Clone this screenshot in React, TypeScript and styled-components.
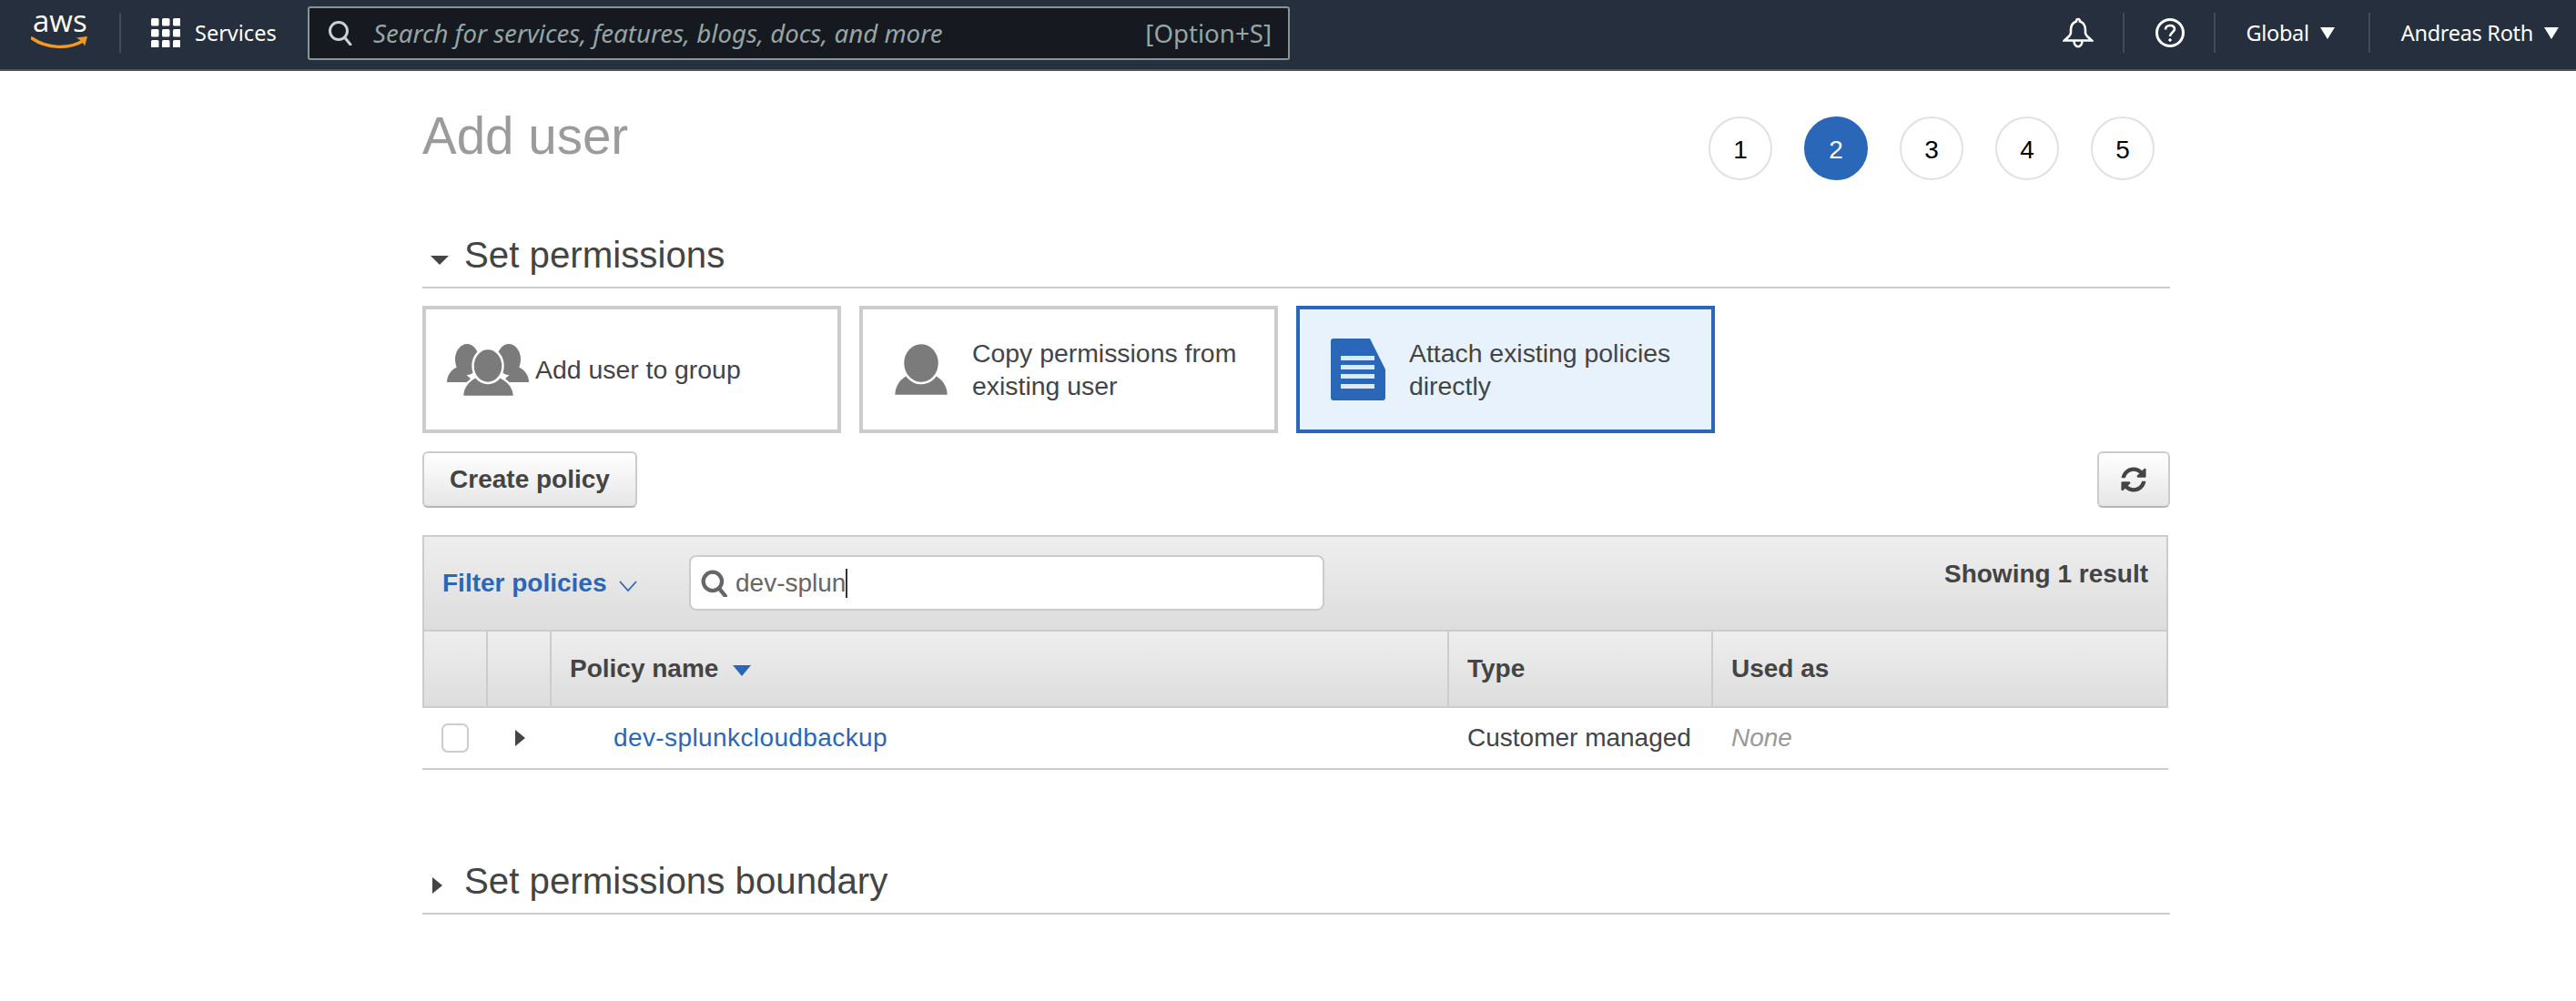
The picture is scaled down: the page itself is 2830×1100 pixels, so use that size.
import { createGlobalStyle, styled } from "styled-components";
import { FaSyncAlt } from "react-icons/fa";

const GlobalStyle = createGlobalStyle`
  body {
    margin: 0;
    background: #fff;
    font-family: "Liberation Sans", Arial, sans-serif;
    color: #444;
  }
`;

const Nav = styled.nav`
  height: 76px;
  box-sizing: content-box;
  background: #252f3e;
  border-bottom: 2px solid #4c5562;
  display: flex;
  align-items: center;
  padding: 0 19px 0 34px;
  font-family: "Noto Sans", sans-serif;
  font-size: 23.5px;
  color: #fff;
`;
const NavInner = styled.div`
  display: flex;
  align-items: center;
  width: 100%;
  margin-bottom: 4px;
`;
const Logo = styled.div`
  width: 64px;
  height: 40px;
  position: relative;
  svg {
    position: absolute;
    left: 0;
    bottom: 0;
  }
`;
const LogoText = styled.span`
  position: absolute;
  left: 2px;
  top: -13px;
  font-family: "Open Sans", sans-serif;
  font-size: 33px;
  line-height: 40px;
`;
const NavSep = styled.div<{ $left: number; $right: number }>`
  width: 2px;
  height: 44px;
  background: #414c5a;
  margin: 0 ${(p) => p.$right}px 0 ${(p) => p.$left}px;
`;
const Services = styled.span`
  width: 90px;
  margin: 0 34px 0 16px;
`;
const SearchBox = styled.div`
  width: 1079px;
  height: 59px;
  box-sizing: border-box;
  background: #16191f;
  border: 2px solid #879596;
  border-radius: 3px;
  display: flex;
  align-items: center;
  padding: 0 18px 0 20px;
  font-size: 27.65px;
  color: #95a5a6;
`;
const SearchHint = styled.span`
  font-style: italic;
  margin-left: 22px;
`;
const Shortcut = styled.span`
  margin-left: auto;
`;
const NavRight = styled.div`
  margin-left: auto;
  display: flex;
  align-items: center;
  letter-spacing: -0.3px;
`;
const NavCaret = styled.i`
  display: inline-block;
  border-left: 8px solid transparent;
  border-right: 8px solid transparent;
  border-top: 13px solid #fff;
  margin-left: 12px;
`;
const NavItem = styled.span`
  display: flex;
  align-items: center;
`;

const Main = styled.main`
  padding: 40px 446px 0 464px;
`;
const TitleRow = styled.div`
  display: flex;
  justify-content: space-between;
  align-items: flex-start;
  padding-right: 17px;
`;
const Title = styled.h1`
  margin: 0;
  font-size: 56.5px;
  line-height: 64px;
  font-weight: 400;
  color: #9b9b9b;
`;
const Stepper = styled.div`
  display: flex;
  gap: 35px;
  margin-top: 10px;
`;
const Step = styled.div<{ $active?: boolean }>`
  width: 70px;
  height: 70px;
  box-sizing: border-box;
  border-radius: 50%;
  border: 2px solid ${(p) => (p.$active ? "#2a67b8" : "#e1e1e1")};
  background: ${(p) => (p.$active ? "#2a67b8" : "#fff")};
  color: ${(p) => (p.$active ? "#fff" : "#000")};
  font-size: 28px;
  display: flex;
  align-items: center;
  justify-content: center;
  padding-top: 3px;
`;
const SectionHead = styled.h2<{ $top: number }>`
  margin: ${(p) => p.$top}px 0 0;
  padding-bottom: 10px;
  border-bottom: 2px solid #ccc;
  display: flex;
  align-items: center;
  font-size: 40.25px;
  line-height: 48px;
  font-weight: 400;
  color: #444;
`;
const Toggle = styled.span`
  width: 46px;
  display: flex;
  justify-content: center;
`;
const CaretDown = styled.i`
  display: block;
  margin: 10px 0 0 -9px;
  border-left: 10px solid transparent;
  border-right: 10px solid transparent;
  border-top: 10px solid #444;
`;
const CaretRight = styled.i`
  display: block;
  border-top: 9px solid transparent;
  border-bottom: 9px solid transparent;
  border-left: 11px solid #444;
`;
const BoundaryCaret = styled(CaretRight)`
  margin: 8px 0 0 -13px;
`;
const Cards = styled.div`
  display: flex;
  gap: 20px;
  margin-top: 19px;
`;
const Card = styled.div<{ $active?: boolean; $tight?: boolean }>`
  width: 460px;
  height: 140px;
  box-sizing: border-box;
  border: 4px solid ${(p) => (p.$active ? "#2a67b8" : "#ccc")};
  background: ${(p) => (p.$active ? "#e8f2fc" : "#fff")};
  display: flex;
  align-items: center;
  gap: ${(p) => (p.$tight ? 7 : 26)}px;
  padding-left: ${(p) => (p.$tight ? 23 : 34)}px;
  font-size: 28.4px;
  line-height: 36px;
  color: #444;
`;
const CardText = styled.div`
  width: 320px;
`;
const Actions = styled.div`
  display: flex;
  justify-content: space-between;
  margin-top: 20px;
`;
const Button = styled.button<{ $square?: boolean }>`
  height: 62px;
  width: ${(p) => (p.$square ? "80px" : "236px")};
  box-sizing: border-box;
  border: 2px solid #ccc;
  border-bottom-color: #b5b5b5;
  border-radius: 6px;
  background: linear-gradient(#fff, #e6e6e6);
  font-family: inherit;
  font-size: 28px;
  font-weight: 700;
  color: #444;
  display: flex;
  align-items: center;
  justify-content: center;
  padding: 0;
`;
const Panel = styled.section`
  margin-top: 30px;
  width: 1918px;
`;
const FilterBar = styled.div`
  height: 106px;
  box-sizing: border-box;
  border: 2px solid #ccc;
  background: linear-gradient(#eee, #ddd);
  display: flex;
  align-items: flex-start;
  padding: 20px 20px 0 20px;
`;
const FilterLabel = styled.span`
  width: 271px;
  height: 61px;
  display: flex;
  align-items: center;
  font-size: 28px;
  font-weight: 700;
  color: #2a67b8;
  svg {
    margin: 6px 0 0 13px;
  }
`;
const FilterInput = styled.div`
  width: 698px;
  height: 61px;
  box-sizing: border-box;
  background: #fff;
  border: 2px solid #ccc;
  border-radius: 8px;
  display: flex;
  align-items: center;
  padding-left: 11px;
  font-size: 28px;
  color: #666;
`;
const InputText = styled.span`
  margin-left: 8px;
`;
const Cursor = styled.i`
  display: inline-block;
  width: 2px;
  height: 32px;
  background: #333;
`;
const ResultCount = styled.span`
  margin: 0 0 0 auto;
  font-size: 28px;
  font-weight: 700;
  line-height: 42px;
  color: #444;
`;
const columns = "70px 70px 986px 290px 1fr";
const HeadRow = styled.div`
  display: grid;
  grid-template-columns: ${columns};
  height: 82px;
  border: 2px solid #ccc;
  border-top: 0;
  background: linear-gradient(#eee, #ddd);
`;
const HeadCell = styled.div<{ $last?: boolean }>`
  display: flex;
  align-items: center;
  padding-left: 20px;
  font-size: 28px;
  font-weight: 700;
  color: #444;
  border-right: ${(p) => (p.$last ? "0" : "2px solid #ccc")};
`;
const SortCaret = styled.i`
  display: block;
  margin: 4px 0 0 16px;
  border-left: 10px solid transparent;
  border-right: 10px solid transparent;
  border-top: 12px solid #2a67b8;
`;
const DataRow = styled.div`
  display: grid;
  grid-template-columns: ${columns};
  height: 66px;
  padding-left: 2px;
  border-bottom: 2px solid #ccc;
  font-size: 28px;
  color: #444;
`;
const DataCell = styled.div<{ $inset: number }>`
  display: flex;
  align-items: center;
  padding-left: ${(p) => p.$inset}px;
`;
const Checkbox = styled.span`
  width: 30px;
  height: 32px;
  box-sizing: border-box;
  border: 2px solid #ccc;
  border-radius: 7px;
  background: #fff;
`;
const RowLink = styled.a`
  color: #2a67b8;
  letter-spacing: 0.4px;
`;
const Muted = styled.span`
  font-style: italic;
  color: #999;
`;

const Steps = [1, 2, 3, 4, 5];

const GroupIcon = () => (
  <svg width="90" height="57" viewBox="0 0 90 57">
    <g fill="#7b7b7b">
      <ellipse cx="22" cy="17" rx="13" ry="17" />
      <ellipse cx="68" cy="17" rx="13" ry="17" />
      <path d="M0 42C0 34 5 28 12 25L30 42Z" />
      <path d="M90 42C90 34 85 28 78 25L60 42Z" />
      <g stroke="#fff" strokeWidth="2.5">
        <path d="M17 58C17 46 24 40 32 36C37 44 53 44 58 36C66 40 74 46 74 58Z" />
        <ellipse cx="45" cy="24" rx="16.500" ry="19" />
      </g>
    </g>
  </svg>
);

const UserIcon = () => (
  <svg width="60" height="56" viewBox="0 0 60 56">
    <g fill="#7b7b7b" stroke="#fff" strokeWidth="2.5">
      <path d="M0 57C0 44 8 36 17 32C22 42 38 42 43 32C52 36 60 44 60 57Z" />
      <ellipse cx="30" cy="21" rx="20" ry="22" />
    </g>
  </svg>
);

const DocIcon = () => (
  <svg width="60" height="68" viewBox="0 0 60 68">
    <path d="M3 0H43L60 34V65Q60 68 57 68H3Q0 68 0 65V3Q0 0 3 0Z" fill="#2a67b8" />
    <g fill="#dceaf8">
      <rect x="11" y="19" width="37" height="5" />
      <rect x="11" y="29" width="37" height="5" />
      <rect x="11" y="39" width="37" height="5" />
      <rect x="11" y="50" width="37" height="5" />
    </g>
  </svg>
);

const SearchGlass = ({ size, color, width }: { size: number; color: string; width: number }) => (
  <svg width={size} height={size} viewBox="0 0 28 28" fill="none" stroke={color} strokeWidth={width}>
    <circle cx="12" cy="12" r="9.5" />
    <path d="M18.5 19L25 27" strokeLinecap="round" />
  </svg>
);

const App = () => {
  return (
    <>
      <GlobalStyle />
      <Nav>
        <NavInner>
          <Logo>
            <LogoText>aws</LogoText>
            <svg width="64" height="18" viewBox="0 0 64 18">
              <path d="M1 4C18 16 42 16 57 7" fill="none" stroke="#f29a22" strokeWidth="3.4" strokeLinecap="round" />
              <path d="M50 3.5L62 2L59 13Q58 8 50 3.5Z" fill="#f29a22" />
            </svg>
          </Logo>
          <NavSep $left={33} $right={33} />
          <svg width="32" height="32" viewBox="0 0 32 32" fill="#fff">
            {[0, 12, 24].map((y) =>
              [0, 12, 24].map((x) => <rect key={`${x}-${y}`} x={x} y={y} width="8.5" height="8.5" rx="1.5" />)
            )}
          </svg>
          <Services>Services</Services>
          <SearchBox>
            <SearchGlass size={28} color="#c9d1d2" width={3} />
            <SearchHint>Search for services, features, blogs, docs, and more</SearchHint>
            <Shortcut>[Option+S]</Shortcut>
          </SearchBox>
          <NavRight>
            <svg width="34" height="34" viewBox="0 0 34 34" fill="none" stroke="#fff" strokeWidth="2.6">
              <path d="M17 2C15.6 2 15 3 15 4.5C10.5 6 9 10 9 14V17C9 20 5 22.5 2 25.5H32C29 22.5 25 20 25 17V14C25 10 23.500 6 19 4.5C19 3 18.4 2 17 2Z" />
              <path d="M12.500 25.500C12.500 34.500 21.500 34.500 21.500 25.500" />
            </svg>
            <NavSep $left={32} $right={33} />
            <svg width="34" height="34" viewBox="0 0 34 34" fill="none" stroke="#fff" strokeWidth="3">
              <circle cx="17" cy="17" r="14.500" />
              <path d="M12 13.500C12 7.500 22 7.500 22 13C22 16.500 17 16.500 17 21" strokeWidth="2.600" />
              <circle cx="17" cy="25" r="1.300" fill="#fff" strokeWidth="1" />
            </svg>
            <NavSep $left={31} $right={33} />
            <NavItem>
              Global
              <NavCaret />
            </NavItem>
            <NavSep $left={37} $right={34} />
            <NavItem>
              Andreas Roth
              <NavCaret />
            </NavItem>
          </NavRight>
        </NavInner>
      </Nav>
      <Main>
        <TitleRow>
          <Title>Add user</Title>
          <Stepper>
            {Steps.map((n) => (
              <Step key={n} $active={n === 2}>
                {n}
              </Step>
            ))}
          </Stepper>
        </TitleRow>
        <SectionHead $top={59}>
          <Toggle>
            <CaretDown />
          </Toggle>
          Set permissions
        </SectionHead>
        <Cards>
          <Card $tight>
            <GroupIcon />
            <CardText>Add user to group</CardText>
          </Card>
          <Card>
            <UserIcon />
            <CardText>Copy permissions from existing user</CardText>
          </Card>
          <Card $active>
            <DocIcon />
            <CardText>Attach existing policies directly</CardText>
          </Card>
        </Cards>
        <Actions>
          <Button>Create policy</Button>
          <Button $square>
            <FaSyncAlt size={28} />
          </Button>
        </Actions>
        <Panel>
          <FilterBar>
            <FilterLabel>
              Filter policies
              <svg width="20" height="12" viewBox="0 0 20 12" fill="none" stroke="#2a67b8" strokeWidth="1.800">
                <path d="M1 1L10 11L19 1" />
              </svg>
            </FilterLabel>
            <FilterInput>
              <SearchGlass size={30} color="#666" width={4} />
              <InputText>dev-splun</InputText>
              <Cursor />
            </FilterInput>
            <ResultCount>Showing 1 result</ResultCount>
          </FilterBar>
          <HeadRow>
            <HeadCell />
            <HeadCell />
            <HeadCell>
              Policy name
              <SortCaret />
            </HeadCell>
            <HeadCell>Type</HeadCell>
            <HeadCell $last>Used as</HeadCell>
          </HeadRow>
          <DataRow>
            <DataCell $inset={19}>
              <Checkbox />
            </DataCell>
            <DataCell $inset={30}>
              <CaretRight />
            </DataCell>
            <DataCell $inset={68}>
              <RowLink>dev-splunkcloudbackup</RowLink>
            </DataCell>
            <DataCell $inset={20}>Customer managed</DataCell>
            <DataCell $inset={20}>
              <Muted>None</Muted>
            </DataCell>
          </DataRow>
        </Panel>
        <SectionHead $top={99}>
          <Toggle>
            <BoundaryCaret />
          </Toggle>
          Set permissions boundary
        </SectionHead>
      </Main>
    </>
  );
};

export default App;
